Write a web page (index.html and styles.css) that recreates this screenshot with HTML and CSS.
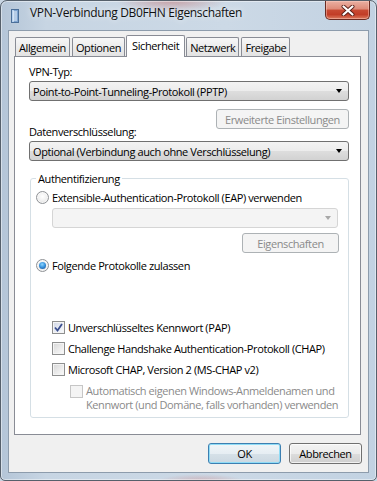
FILE: index.html
```html
<!DOCTYPE html>
<html lang="de">
<head>
<meta charset="utf-8">
<title>VPN-Verbindung DB0FHN Eigenschaften</title>
<link rel="stylesheet" href="styles.css">
</head>
<body>
<div class="window">
  <div class="titlebar">
    <svg class="app-icon" width="8" height="14" viewBox="0 0 8 14">
      <rect x="0" y="0" width="8" height="14" fill="#4b6f99"/>
      <rect x="1" y="1" width="6" height="12" fill="#7ea4d0"/>
      <rect x="1" y="1" width="2" height="12" fill="#b9d2ee"/>
      <path d="M2 3h4M2 5h4M2 7h4M2 9h4M2 11h4" stroke="#eef5fd" stroke-width="1"/>
    </svg>
    <span class="title">VPN-Verbindung DB0FHN Eigenschaften</span>
    <div class="close" aria-label="Schließen">
      <svg width="14" height="11" viewBox="0 0 14 11">
        <path d="M2.5 1.5l9 8M11.5 1.5l-9 8" stroke="#5a2018" stroke-width="4" stroke-linecap="round"/>
        <path d="M2.5 1.5l9 8M11.5 1.5l-9 8" stroke="#ffffff" stroke-width="2.2" stroke-linecap="round"/>
      </svg>
    </div>
  </div>

  <div class="client">
    <div class="tabs">
      <div class="tab">Allgemein</div>
      <div class="tab">Optionen</div>
      <div class="tab active">Sicherheit</div>
      <div class="tab">Netzwerk</div>
      <div class="tab">Freigabe</div>
    </div>

    <div class="panel">
      <div class="label">VPN-Typ:</div>
      <div class="combo"><span class="combo-text">Point-to-Point-Tunneling-Protokoll (PPTP)</span><span class="arrow"></span></div>
      <div class="btn-row"><div class="btn disabled wide">Erweiterte Einstellungen</div></div>

      <div class="label label-tight">Datenverschlüsselung:</div>
      <div class="combo"><span class="combo-text">Optional (Verbindung auch ohne Verschlüsselung)</span><span class="arrow"></span></div>

      <fieldset class="group">
        <legend>Authentifizierung</legend>
        <div class="opt radio-row first"><span class="radio"></span><span>Extensible-Authentication-Protokoll (EAP) verwenden</span></div>
        <div class="combo combo-disabled"><span class="combo-text"></span><span class="arrow"></span></div>
        <div class="btn disabled props">Eigenschaften</div>
        <div class="opt radio-row second"><span class="radio checked"></span><span>Folgende Protokolle zulassen</span></div>

        <div class="checks">
          <div class="opt check-row"><span class="check checked">
            <svg width="9" height="9" viewBox="0 0 9 9"><path d="M1 4.5l2.5 3L8 1" fill="none" stroke="#3b4f8f" stroke-width="1.8"/></svg>
          </span><span>Unverschlüsseltes Kennwort (PAP)</span></div>
          <div class="opt check-row"><span class="check"></span><span>Challenge Handshake Authentication-Protokoll (CHAP)</span></div>
          <div class="opt check-row"><span class="check"></span><span>Microsoft CHAP, Version 2 (MS-CHAP v2)</span></div>
          <div class="opt auto-row"><span class="check check-disabled"></span><span class="disabled-text">Automatisch eigenen Windows-Anmeldenamen und<br>Kennwort (und Domäne, falls vorhanden) verwenden</span></div>
        </div>
      </fieldset>
    </div>

    <div class="footer">
      <div class="btn default">OK</div>
      <div class="btn">Abbrechen</div>
    </div>
  </div>
</div>
</body>
</html>
```
FILE: styles.css
```css
html, body {
  margin: 0;
  padding: 0;
  background: #c9d6e3;
}

.window {
  width: 377px;
  height: 481px;
  box-sizing: border-box;
  border: 1px solid #56606b;
  border-radius: 7px 7px 5px 5px;
  overflow: hidden;
  display: flex;
  flex-direction: column;
  font-family: "Open Sans", "Noto Sans", sans-serif;
  font-size: 11px;
  letter-spacing: -0.4px;
  color: #000;
  background:
    radial-gradient(ellipse 55px 12px at 170px 0px, rgba(196, 120, 118, 0.55), rgba(196, 120, 118, 0)),
    radial-gradient(ellipse 45px 8px at 200px 481px, rgba(205, 130, 130, 0.5), rgba(205, 130, 130, 0)),
    linear-gradient(to right, #b4c5d7 0%, #c7d5e3 12%, #ccd9e6 60%, #c2d2e2 100%);
  box-shadow: inset 0 0 0 1px rgba(255, 255, 255, 0.45);
}

/* ---------- title bar ---------- */
.titlebar {
  height: 29px;
  flex: none;
  display: flex;
  align-items: flex-start;
  padding-left: 10px;
}

.app-icon {
  margin-top: 8px;
  flex: none;
}

.title {
  margin-left: 11px;
  margin-top: 4px;
  font-size: 12px;
  line-height: 16px;
  letter-spacing: -0.35px;
  color: #111;
  text-shadow: 0 0 6px rgba(255, 255, 255, 0.9);
  white-space: nowrap;
}

.close {
  margin-left: auto;
  margin-right: 6px;
  width: 45px;
  height: 19px;
  box-sizing: border-box;
  border: 1px solid #6a2b22;
  border-top: none;
  border-radius: 0 0 5px 5px;
  background: linear-gradient(to bottom, #eab0a2 0%, #de8a78 45%, #c84a33 50%, #c23d27 75%, #dc7b5f 100%);
  box-shadow: inset 0 0 0 1px rgba(255, 210, 200, 0.45);
  display: flex;
  align-items: center;
  justify-content: center;
}

/* ---------- client ---------- */
.client {
  flex: 1;
  margin: 0 7px 7px;
  border: 1px solid #8d9cac;
  background: #f0f0f0;
  padding: 4px 6px 0 5px;
  display: flex;
  flex-direction: column;
  min-height: 0;
}

.tabs {
  height: 21px;
  flex: none;
  display: flex;
  align-items: flex-end;
  padding-left: 1px;
  position: relative;
  z-index: 1;
}

.tab {
  height: 19px;
  box-sizing: border-box;
  border: 1px solid #898c95;
  border-bottom: none;
  border-radius: 2px 2px 0 0;
  background: linear-gradient(to bottom, #f7f7f7 0%, #ececec 50%, #e3e3e3 100%);
  padding: 2px 3px 0;
  line-height: 15px;
  margin-right: 2px;
  white-space: nowrap;
}

.tab.active {
  height: 22px;
  margin: 0 1px -1px -1px;
  padding: 2px 5px 0;
  background: #fff;
}

.panel {
  flex: 1;
  margin-right: 1px;
  border: 1px solid #898c95;
  background: #fff;
  padding: 7px 11px 0 14px;
  display: flex;
  flex-direction: column;
  min-height: 0;
}

.label {
  height: 15px;
  line-height: 15px;
  white-space: nowrap;
}

.label-tight {
  margin-top: -5px;
}

.combo {
  margin-top: 2px;
  height: 20px;
  box-sizing: border-box;
  border: 1px solid #707070;
  border-radius: 3px;
  background: linear-gradient(to bottom, #f3f3f3 0%, #ececec 50%, #dedede 50%, #d2d2d2 100%);
  display: flex;
  align-items: center;
  padding: 0 6px 0 3px;
  line-height: 15px;
  white-space: nowrap;
}

.combo-text {
  flex: 1;
}

.arrow {
  width: 0;
  height: 0;
  border-left: 3.5px solid transparent;
  border-right: 3.5px solid transparent;
  border-top: 4px solid #000;
}

.btn-row {
  display: flex;
  justify-content: flex-end;
  margin-top: 8px;
}

.btn {
  width: 73px;
  height: 21px;
  box-sizing: border-box;
  border: 1px solid #707070;
  border-radius: 3px;
  background: linear-gradient(to bottom, #f3f3f3 0%, #ebebeb 50%, #dddddd 50%, #cfcfcf 100%);
  box-shadow: inset 0 0 0 1px rgba(255, 255, 255, 0.7);
  display: flex;
  align-items: center;
  justify-content: center;
  line-height: 15px;
  white-space: nowrap;
}

.btn.disabled {
  border-color: #adb2b5;
  background: #f4f4f4;
  box-shadow: none;
  color: #8a8a8a;
}

.btn.wide {
  width: 133px;
  height: 20px;
}

.btn.default {
  border-color: #3c7fb1;
  box-shadow: inset 0 0 0 1px #8fdcf6;
  background: linear-gradient(to bottom, #f0f5f8 0%, #e6eef3 50%, #d6e1e8 50%, #cbd8e1 100%);
}

/* ---------- group ---------- */
.group {
  margin: 10px 0 0 1px;
  padding: 0 0 5px;
  border: 1px solid #d5dfe5;
  border-radius: 3px;
  min-width: 0;
  display: flex;
  flex-direction: column;
}

.group legend {
  margin-left: 5px;
  padding: 0 2px;
  line-height: 15px;
}

.opt {
  display: flex;
  align-items: center;
  gap: 3px;
  white-space: nowrap;
}

.radio-row {
  height: 15px;
  padding-left: 5px;
}

.radio-row.first {
  margin-top: 4px;
}

.radio-row.second {
  margin-top: 5px;
}

.radio {
  width: 13px;
  height: 13px;
  box-sizing: border-box;
  border-radius: 50%;
  border: 1px solid #8f9296;
  background: radial-gradient(circle at 50% 40%, #ffffff 0%, #f2f2f2 45%, #d8d8d8 100%);
  box-shadow: inset 0 0 0 1px rgba(255, 255, 255, 0.6);
  display: flex;
  align-items: center;
  justify-content: center;
  flex: none;
}

.radio.checked::after {
  content: "";
  width: 7px;
  height: 7px;
  border-radius: 50%;
  background: radial-gradient(circle at 45% 35%, #8fd6ff 0%, #3c97e0 45%, #12468f 100%);
}

.combo-disabled {
  margin: 3px 10px 0 21px;
  border-color: #d5d5d5;
  background: #f4f4f4;
}

.combo-disabled .arrow {
  border-top-color: #a8a8a8;
}

.props {
  align-self: flex-end;
  margin: 5px 9px 0 0;
  width: 97px;
  height: 20px;
}

.checks {
  margin-top: 44px;
  display: flex;
  flex-direction: column;
}

.check-row {
  height: 21px;
  padding-left: 21px;
}

.check {
  width: 13px;
  height: 13px;
  box-sizing: border-box;
  border: 1px solid #8e8f8f;
  background: linear-gradient(135deg, #d6d6d6 0%, #ebebeb 55%, #fbfbfb 100%);
  box-shadow: inset 0 0 0 1px #f4f4f4;
  display: flex;
  align-items: center;
  justify-content: center;
  flex: none;
}

.check.checked {
  background: linear-gradient(135deg, #d0d6e6 0%, #e8ecf4 55%, #fafbfd 100%);
}

.check-disabled {
  border-color: #c6c6c6;
  background: #f4f4f4;
  box-shadow: none;
}

.auto-row {
  align-items: flex-start;
  margin-top: 4px;
  padding-left: 39px;
  line-height: 14px;
}

.auto-row .check {
  margin-top: 1px;
}

.disabled-text {
  color: #8a8a8a;
}

/* ---------- footer ---------- */
.footer {
  flex: none;
  height: 37px;
  box-sizing: border-box;
  padding-top: 8px;
  display: flex;
  justify-content: flex-end;
  gap: 8px;
}
```
